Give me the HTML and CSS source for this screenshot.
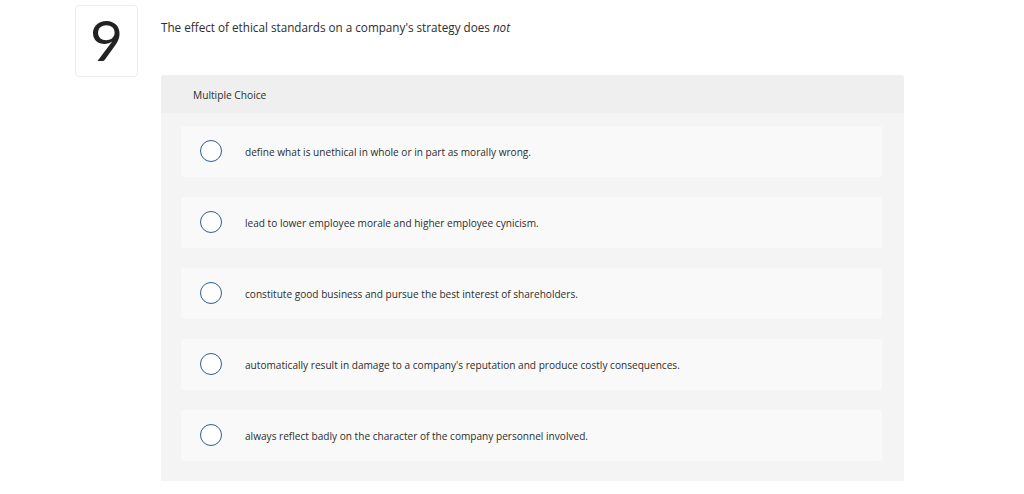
FILE: index.html
```html
<!DOCTYPE html>
<html>
<head>
<meta charset="utf-8">
<link rel="stylesheet" href="styles.css">
</head>
<body>
<div class="question">
  <div class="qnum">9</div>
  <div class="qmain">
    <p class="prompt">The effect of ethical standards on a company's strategy does <em>not</em></p>
    <div class="panel">
      <div class="panel-head">Multiple Choice</div>
      <div class="options">
        <div class="option"><span class="radio"></span><span class="otext">define what is unethical in whole or in part as morally wrong.</span></div>
        <div class="option"><span class="radio"></span><span class="otext">lead to lower employee morale and higher employee cynicism.</span></div>
        <div class="option"><span class="radio"></span><span class="otext">constitute good business and pursue the best interest of shareholders.</span></div>
        <div class="option"><span class="radio"></span><span class="otext">automatically result in damage to a company's reputation and produce costly consequences.</span></div>
        <div class="option"><span class="radio"></span><span class="otext">always reflect badly on the character of the company personnel involved.</span></div>
      </div>
    </div>
  </div>
</div>
</body>
</html>
```
FILE: styles.css
```css
html, body { margin: 0; padding: 0; background: #fff; }
body { font-family: "Open Sans", Lato, "Liberation Sans", sans-serif; color: #2d2d2d; }
.question { display: flex; padding: 5px 0 0 75px; gap: 23px; }
.qnum {
  width: 63px; height: 72px; box-sizing: border-box;
  border: 1px solid #ececec; border-radius: 4px;
  display: flex; align-items: center; justify-content: center;
  font-family: Lato, "Open Sans", sans-serif;
  font-size: 57px; line-height: 1; color: #222; font-weight: 400;
  padding-bottom: 3px;
}
.qmain { flex: 0 0 743px; }
.prompt { margin: 14px 0 0 0; font-size: 11.7px; line-height: 16px; }
.prompt em { font-style: italic; }
.panel { margin-top: 40px; background: #f4f4f4; border-radius: 3px 3px 0 0; }
.panel-head { background: #efefef; height: 38px; line-height: 40px; padding-left: 32px; font-size: 10.2px; border-radius: 3px 3px 0 0; }
.options { display: flex; flex-direction: column; gap: 20px; padding: 13px 22px 20px 20px; }
.option { background: #f9f9f9; height: 51px; border-radius: 3px; display: flex; align-items: center; padding-left: 19px; }
.radio { width: 20px; height: 20px; border: 1px solid #2f5d97; border-radius: 50%; flex: none; background: #fff; margin-top: -1px; }
.otext { margin-left: 23px; font-size: 10.1px; }
```
